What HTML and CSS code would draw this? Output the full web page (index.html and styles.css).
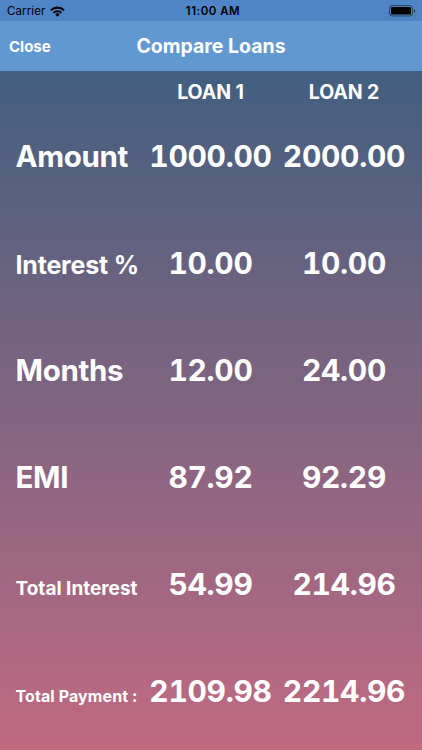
FILE: index.html
```html
<!DOCTYPE html>
<html lang="en">
<head>
    <meta charset="UTF-8">
    <title>Compare Loans</title>
    <meta name="viewport" content="width=device-width, initial-scale=1.0">
    <link rel="stylesheet" href="styles.css">
</head>
<body>

<div class="screen">
    <div class="status-bar">
        <span class="carrier">Carrier
            <svg class="wifi" width="15" height="11" viewBox="0 0 16 11">
                <path d="M1 4.2a10 10 0 0 1 14 0" fill="none" stroke="#000" stroke-width="2.2"/>
                <path d="M3.7 7a6.1 6.1 0 0 1 8.6 0" fill="none" stroke="#000" stroke-width="2.1"/>
                <path d="M8 11 5.6 8.6a3.4 3.4 0 0 1 4.8 0z"/>
            </svg>
        </span>
        <span class="time">11:00 AM</span>
        <svg class="battery" width="27" height="12" viewBox="0 0 27 12">
            <rect x=".5" y=".5" width="23" height="10.5" rx="2.7" fill="none" stroke="#000" stroke-opacity=".5"/>
            <rect x="2" y="2" width="20" height="7.5" rx="1"/>
            <path d="M25 4v4c1.6-.6 1.6-3.4 0-4z" fill-opacity=".55"/>
        </svg>
    </div>

    <div class="nav-bar">
        <span class="close">Close</span>
        <span class="title">Compare Loans</span>
    </div>

    <div class="loans">
        <div class="row head"><span></span><span>LOAN 1</span><span>LOAN 2</span></div>
        <div class="row"><span class="label amount">Amount</span><span class="value">1000.00</span><span class="value">2000.00</span></div>
        <div class="row"><span class="label interest">Interest %</span><span class="value">10.00</span><span class="value">10.00</span></div>
        <div class="row"><span class="label months">Months</span><span class="value">12.00</span><span class="value">24.00</span></div>
        <div class="row"><span class="label emi">EMI</span><span class="value">87.92</span><span class="value">92.29</span></div>
        <div class="row"><span class="label total-interest">Total Interest</span><span class="value">54.99</span><span class="value">214.96</span></div>
        <div class="row"><span class="label total-payment">Total Payment :</span><span class="value">2109.98</span><span class="value">2214.96</span></div>
    </div>
</div>

</body>
</html>
```
FILE: styles.css
```css
body {
    margin: 0;
    font-family: Inter, "Liberation Sans", sans-serif;
    color: #fff;
}

.screen {
    height: 750px;
    display: flex;
    flex-direction: column;
    overflow: hidden;
    background: linear-gradient(#425f7f 71px, #c16a82 750px);
}

.status-bar {
    box-sizing: border-box;
    flex: 0 0 21px;
    padding: 1px 6px 0 7px;
    display: grid;
    grid-template-columns: 1fr auto 1fr;
    align-items: center;
    background: #4f84c6;
    color: #000;
    font-size: 11.5px;
}

.carrier {
    display: flex;
    align-items: center;
    gap: 5px;
    letter-spacing: 0.1px;
}

.time {
    padding-left: 3px;
    font-weight: 600;
    letter-spacing: 0.5px;
}

.battery {
    justify-self: end;
}

.nav-bar {
    flex: 0 0 50px;
    padding: 0 9px;
    display: grid;
    grid-template-columns: 1fr auto 1fr;
    align-items: center;
    background: #6298d0;
    font-weight: 700;
}

.close {
    font-size: 15px;
}

.title {
    font-size: 19.5px;
}

.loans {
    padding-top: 1px;
}

.row {
    height: 107px;
    padding-left: 15.5px;
    display: grid;
    grid-template-columns: 128.5px 133px 134px;
    align-items: baseline;
    font-weight: 700;
    text-align: center;
    white-space: nowrap;
    line-height: 40px;
}

.head {
    height: 64px;
    font-size: 19.5px;
    letter-spacing: -0.1px;
}

.label {
    text-align: left;
}

.value {
    font-size: 30px;
    font-variant-numeric: tabular-nums;
    letter-spacing: -0.3px;
}

.amount,
.months,
.emi {
    font-size: 29.5px;
    letter-spacing: -0.35px;
}

.interest {
    font-size: 25px;
    letter-spacing: -0.2px;
}

.total-interest {
    font-size: 19px;
}

.total-payment {
    font-size: 16px;
    letter-spacing: 0.1px;
}
```
